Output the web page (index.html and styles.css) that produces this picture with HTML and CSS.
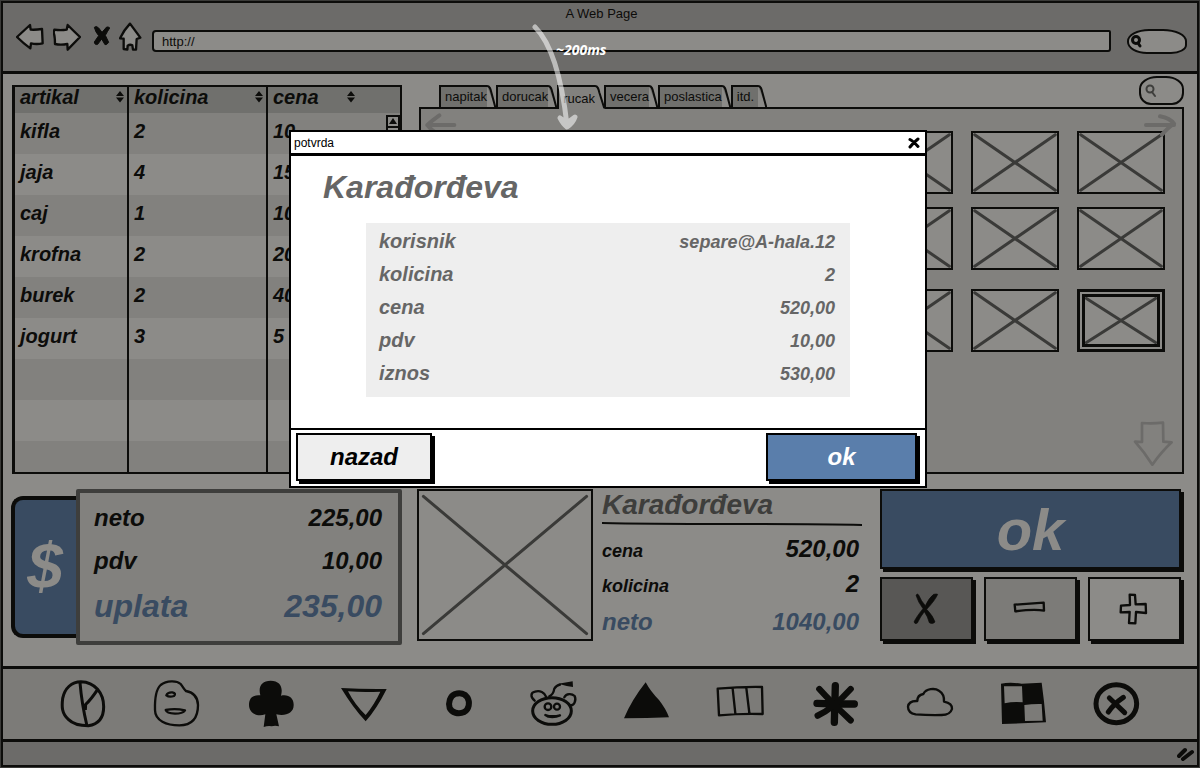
FILE: index.html
```html
<!DOCTYPE html>
<html lang="sr">
<head>
<meta charset="utf-8">
<title>A Web Page</title>
<link rel="stylesheet" href="styles.css">
</head>
<body>
<svg class="defs" width="0" height="0" aria-hidden="true">
  <symbol id="cross" viewBox="0 0 100 100" preserveAspectRatio="none">
    <path d="M2 3L98 97M98 3L2 97" vector-effect="non-scaling-stroke"/>
  </symbol>
  <symbol id="sort" viewBox="0 0 10 12"><path d="M5 0L9 5H1ZM1 6.5H9L5 11.5Z" fill="#0c0c0a"/></symbol>
  <symbol id="slant" viewBox="0 0 9 23"><path class="slant-line" d="M0 1C3 1 3.500 4 4.500 8L8.500 23"/></symbol>
</svg>

<div class="window">
  <header class="chrome">
    <div class="window-title">A Web Page</div>
    <div class="nav">
      <button class="icon-button" aria-label="Back"><svg width="28" height="40" viewBox="48 63 84 120"><path class="sketch fill" d="M51 111L90 75L92 89Q108 90 126 87L128 130Q110 134 93 130L91 145Q70 130 51 111Z"/></svg></button>
      <button class="icon-button" aria-label="Forward"><svg width="28" height="40" viewBox="159 63 84 120"><path class="sketch fill" d="M163 89Q182 92 200 89L203 75Q222 94 240 111L203 149L202 132Q182 136 165 132Q165 110 161 98Z"/></svg></button>
      <button class="icon-button" aria-label="Stop"><svg width="20" height="40" viewBox="270 63 60 120"><path d="M283 82Q289 76 296 84L306 97L320 81Q328 80 329 84Q322 95 316 106L326 127Q320 136 315 134L305 117L293 133Q284 136 283 126L296 107Q286 96 283 82Z" fill="#0c0c0a" stroke="#0c0c0a" stroke-width="3"/></svg></button>
      <button class="icon-button" aria-label="Home"><svg width="24" height="40" viewBox="357 63 72 120"><path class="sketch fill" d="M390 71L421 113L410 117L408 149L399 149L397 136Q390 132 383 137L382 149L371 147L371 116L360 115Q372 90 390 71Z"/></svg></button>
      <input class="url" type="text" value="http://" aria-label="Address">
      <label class="pill pill-browser"><svg width="12" height="14" viewBox="0 0 12 14"><circle cx="6" cy="6" r="3.500"/><path d="M8 9L10 12"/></svg><input type="search" aria-label="Web search"></label>
    </div>
  </header>

  <main class="main">
    <section class="order">
      <table>
        <colgroup><col class="col-name"><col class="col-qty"><col></colgroup>
        <thead><tr>
          <th><div class="head">artikal<svg width="10" height="12"><use href="#sort"/></svg></div></th>
          <th><div class="head">kolicina<svg width="10" height="12"><use href="#sort"/></svg></div></th>
          <th><div class="head head-price">cena<svg width="10" height="12"><use href="#sort"/></svg></div></th>
        </tr></thead>
        <tbody>
          <tr><td>kifla</td><td>2</td><td>10</td></tr>
          <tr><td>jaja</td><td>4</td><td>15</td></tr>
          <tr><td>caj</td><td>1</td><td>10</td></tr>
          <tr><td>krofna</td><td>2</td><td>20</td></tr>
          <tr><td>burek</td><td>2</td><td>40</td></tr>
          <tr><td>jogurt</td><td>3</td><td>5</td></tr>
          <tr><td></td><td></td><td></td></tr>
          <tr><td></td><td></td><td></td></tr>
          <tr><td></td><td></td><td></td></tr>
        </tbody>
      </table>
      <div class="scroll"><svg width="10" height="9" viewBox="0 0 10 9"><path d="M5 1L9 7H1Z" fill="#0c0c0a"/></svg></div>
    </section>

    <section class="catalog">
      <div class="catalog-top">
        <nav class="tabs">
          <button class="tab"><span>napitak</span><svg width="9" height="23"><use href="#slant"/></svg></button>
          <button class="tab"><span>dorucak</span><svg width="9" height="23"><use href="#slant"/></svg></button>
          <button class="tab selected"><span>rucak</span><svg width="10" height="24" viewBox="0 0 10 24"><path class="slant-line" d="M0 1C3 1 3.500 4 4.500 8L9.500 24H0"/></svg></button>
          <button class="tab"><span>vecera</span><svg width="9" height="23"><use href="#slant"/></svg></button>
          <button class="tab"><span>poslastica</span><svg width="9" height="23"><use href="#slant"/></svg></button>
          <button class="tab"><span>itd.</span><svg width="9" height="23"><use href="#slant"/></svg></button>
        </nav>
        <label class="pill pill-catalog"><svg width="12" height="14" viewBox="0 0 12 14"><circle cx="5" cy="5" r="3.500"/><path d="M7 8L10 12"/></svg><input type="search" aria-label="Search items"></label>
      </div>
      <div class="panel">
        <div class="tiles">
          <div class="tile"><svg><use href="#cross"/></svg></div><div class="tile"><svg><use href="#cross"/></svg></div><div class="tile"><svg><use href="#cross"/></svg></div><div class="tile"><svg><use href="#cross"/></svg></div><div class="tile"><svg><use href="#cross"/></svg></div><div class="tile"><svg><use href="#cross"/></svg></div><div class="tile"><svg><use href="#cross"/></svg></div>
          <div class="tile"><svg><use href="#cross"/></svg></div><div class="tile"><svg><use href="#cross"/></svg></div><div class="tile"><svg><use href="#cross"/></svg></div><div class="tile"><svg><use href="#cross"/></svg></div><div class="tile"><svg><use href="#cross"/></svg></div><div class="tile"><svg><use href="#cross"/></svg></div><div class="tile"><svg><use href="#cross"/></svg></div>
          <div class="tile"><svg><use href="#cross"/></svg></div><div class="tile"><svg><use href="#cross"/></svg></div><div class="tile"><svg><use href="#cross"/></svg></div><div class="tile"><svg><use href="#cross"/></svg></div><div class="tile"><svg><use href="#cross"/></svg></div><div class="tile"><svg><use href="#cross"/></svg></div><div class="tile current"><div class="tile-inner"><svg><use href="#cross"/></svg></div></div>
        </div>
        <button class="icon-button arrow-left" aria-label="Previous"><svg width="34" height="24" viewBox="69 339 102 72"><path class="faint-line" d="M163 375H82M118 346Q98 360 82 375Q98 395 118 404"/></svg></button>
        <button class="icon-button arrow-right" aria-label="Next"><svg width="34" height="24" viewBox="1032 339 102 72"><path class="faint-line" d="M1038 375H1122M1080 349Q1110 355 1122 371Q1105 382 1086 404"/></svg></button>
        <button class="icon-button arrow-down" aria-label="Scroll down"><svg width="42" height="48" viewBox="816 60 126 144"><path class="faint-outline" d="M846 69Q875 72 909 68L910 125L935 127Q905 155 877 194Q852 155 825 125L846 126Z"/></svg></button>
      </div>
    </section>

    <section class="payment">
      <button class="dollar" aria-label="Naplata">$</button>
      <dl class="totals">
        <div><dt>neto</dt><dd>225,00</dd></div>
        <div><dt>pdv</dt><dd>10,00</dd></div>
        <div class="grand"><dt>uplata</dt><dd>235,00</dd></div>
      </dl>
    </section>

    <section class="item">
      <div class="photo"><svg><use href="#cross"/></svg></div>
      <div class="details">
        <h2>Karađorđeva</h2>
        <svg class="rule" width="100%" height="4" viewBox="0 0 260 4" preserveAspectRatio="none"><path d="M0 1Q40 2 130 2T260 3" fill="none" stroke="#0c0c0a" stroke-width="2"/></svg>
        <dl>
          <div><dt>cena</dt><dd>520,00</dd></div>
          <div><dt>kolicina</dt><dd>2</dd></div>
          <div class="net"><dt>neto</dt><dd>1040,00</dd></div>
        </dl>
      </div>
      <div class="actions">
        <button class="raised confirm">ok</button>
        <button class="raised remove" aria-label="Remove"><svg width="32" height="32" viewBox="151 579 96 96"><path fill="#0c0c0a" stroke="#0c0c0a" stroke-width="2" d="M166 586Q170 579 174 585Q182 604 194 617Q206 592 219 583Q228 581 231 583Q224 600 198 628Q218 649 223 666Q216 674 206 668Q201 649 191 635Q179 650 170 669Q163 674 160 666Q166 652 187 626Q172 606 166 586Z"/></svg></button>
        <button class="raised minus" aria-label="Minus"><svg width="32" height="32" viewBox="460 579 96 96"><path class="thin" d="M459 614Q500 611 546 608L547 632Q520 626 461 634Z"/></svg></button>
        <button class="raised plus" aria-label="Plus"><svg width="32" height="32" viewBox="774 579 96 96"><path class="thin" d="M806 584L822 585L824 613L854 612L855 639L825 636L823 670L804 669L806 636L779 637L780 617L807 615Z"/></svg></button>
      </div>
    </section>
  </main>

  <nav class="toolbar">
    <button class="icon-button" aria-label="Pie"><svg width="48" height="48" viewBox="177 90 144 144"><path class="bold" d="M243 95C285 96 311 130 311 170C311 200 300 222 265 227C235 227 217 220 205 208C185 190 185 170 188 145C194 115 215 95 243 95ZM240 98Q245 160 261 228M293 118Q272 150 257 163L256 180"/></svg></button>
    <button class="icon-button" aria-label="Face"><svg width="48" height="48" viewBox="459 90 144 144"><path class="sketch" d="M482 105C500 91 530 91 542 102C550 112 552 118 558 123C580 127 593 140 594 165C594 205 575 226 538 226C500 226 465 212 465 180C464 145 468 118 482 105ZM499 136Q503 126 517 127Q530 130 522 138Q508 143 499 136ZM497 180Q525 174 555 181Q548 191 525 191Q500 190 497 180Z"/></svg></button>
    <button class="icon-button" aria-label="Club"><svg width="48" height="48" viewBox="741 90 144 144"><path class="solid" d="M781 136C774 110 785 92 812 92C840 92 850 112 843 137C866 132 882 145 881 166C881 190 855 200 829 193L837 229Q825 225 815 229Q804 227 791 231L796 193C770 202 747 188 747 165C747 142 760 134 781 136Z"/></svg></button>
    <button class="icon-button" aria-label="Down"><svg width="48" height="48" viewBox="1023 90 144 144"><path class="solid" fill-rule="evenodd" d="M1023 114Q1090 118 1160 117Q1130 177 1097 214Q1060 175 1023 114ZM1044 124Q1065 165 1097 195Q1122 165 1141 125Q1090 128 1044 124Z"/></svg></button>
    <button class="icon-button" aria-label="Record"><svg width="48" height="48" viewBox="105 90 144 144"><path fill="none" stroke="#0c0c0a" stroke-width="18" d="M165 132C180 127 195 131 202 142C211 158 207 178 193 186C175 194 155 188 149 174C144 158 150 138 165 132Z"/></svg></button>
    <button class="icon-button" aria-label="Alien"><svg width="48" height="48" viewBox="387 90 144 144"><ellipse class="bold" cx="456" cy="183" rx="58" ry="40"/><g class="sketch"><path d="M404 152C390 140 392 128 405 125C420 120 434 128 438 140M493 142C499 130 515 130 524 138C530 152 522 168 509 166M448 139Q460 134 463 116Q469 106 480 104"/><circle cx="444" cy="170" r="10"/><circle cx="471" cy="170" r="9"/><path d="M436 195Q455 202 480 196Q465 203 445 200Z"/></g><path class="solid" d="M475 101L518 94L519 111L500 108Z"/></svg></button>
    <button class="icon-button" aria-label="Up"><svg width="48" height="48" viewBox="669 90 144 144"><path class="solid" d="M737 97Q752 125 777 150Q798 177 807 202Q740 205 672 205Q695 150 737 97Z"/></svg></button>
    <button class="icon-button" aria-label="Columns"><svg width="48" height="48" viewBox="951 90 144 144"><path class="sketch" d="M953 116Q1020 110 1086 111L1088 192Q1020 190 957 196ZM998 116L1006 190M1039 114L1048 189"/></svg></button>
    <button class="icon-button" aria-label="Asterisk"><svg width="48" height="48" viewBox="33 90 144 144"><path fill="none" stroke="#0c0c0a" stroke-linecap="round" stroke-width="22" d="M106 107L103 217M51 160Q90 162 163 162"/><path fill="none" stroke="#0c0c0a" stroke-linecap="round" stroke-width="19" d="M58 117Q90 153 152 211M152 117Q100 175 53 197"/></svg></button>
    <button class="icon-button" aria-label="Cloud"><svg width="48" height="48" viewBox="315 90 144 144"><path class="sketch" d="M352 153Q352 135 370 132C378 115 405 114 417 122C430 130 433 142 432 155C448 158 457 165 456 177C452 190 442 195 425 195Q385 196 347 193C330 190 324 182 324 170C326 156 335 152 352 153Z"/></svg></button>
    <button class="icon-button" aria-label="Checkers"><svg width="48" height="48" viewBox="597 90 144 144"><path class="solid" fill-rule="evenodd" d="M603 101Q630 96 665 101L725 98Q733 155 738 217L606 222ZM612 109L614 160Q640 154 668 157L666 109ZM673 165L675 213L728 212L725 162Q700 161 673 165Z"/></svg></button>
    <button class="icon-button" aria-label="Close"><svg width="48" height="48" viewBox="879 90 144 144"><ellipse fill="none" stroke="#0c0c0a" stroke-width="15" cx="949" cy="161" rx="61" ry="57"/><path fill="none" stroke="#0c0c0a" stroke-linecap="round" stroke-width="15" d="M928 144Q950 165 974 188M970 142Q942 161 925 186"/></svg></button>
  </nav>
  <footer class="status"><svg width="18" height="16" viewBox="0 0 18 16"><path d="M2 10L8 4M6 13L15 6" fill="none" stroke="#0c0c0a" stroke-width="4" stroke-linecap="round"/></svg></footer>
</div>

<div class="overlay">
  <svg class="motion" width="60" height="110" viewBox="0 0 60 110"><path d="M14 6C32 24 41 60 46 104M39 97Q42 103 46 106Q52 102 54 96L46 102Z"/></svg>
  <span class="motion-time">~200ms</span>
  <section class="dialog" role="dialog" aria-label="potvrda">
    <header class="dialog-title">potvrda
      <button class="icon-button" aria-label="Close"><svg width="12" height="12" viewBox="0 0 12 12"><path d="M2 2.500Q5 4 10 9.500M10 2Q5 6 2 10" fill="none" stroke="#000" stroke-width="3" stroke-linecap="round"/></svg></button>
    </header>
    <div class="dialog-body">
      <h1>Karađorđeva</h1>
      <dl>
        <div><dt>korisnik</dt><dd>separe@A-hala.12</dd></div>
        <div><dt>kolicina</dt><dd>2</dd></div>
        <div><dt>cena</dt><dd>520,00</dd></div>
        <div><dt>pdv</dt><dd>10,00</dd></div>
        <div><dt>iznos</dt><dd>530,00</dd></div>
      </dl>
    </div>
    <footer class="dialog-actions">
      <button class="raised back">nazad</button>
      <button class="raised accept">ok</button>
    </footer>
  </section>
</div>
</body>
</html>
```
FILE: styles.css
```css
:root {
  --ink: #0c0c0a;
  --page: #8c8b88;
  --shade: #82817e;
  --chrome: #6c6b69;
  --bar: #7c7b78;
  --blue: #394b61;
  --dark: #3e3e3c;
}
* { box-sizing: border-box; }
body {
  margin: 0;
  height: 100vh;
  background: #3a3a38;
  color: var(--ink);
  font: 13px "Liberation Sans", Arial, sans-serif;
}
button, input { font: inherit; color: inherit; }
button { padding: 0; }
svg { display: block; }
h1, h2, dl, dd { margin: 0; }
.defs { position: absolute; }

.icon-button { background: none; border: 0; line-height: 0; }
.sketch { fill: none; stroke: var(--ink); stroke-width: 7; stroke-linejoin: round; stroke-linecap: round; }
.fill { fill: var(--page); }
.bold { fill: none; stroke: var(--ink); stroke-width: 9; stroke-linejoin: round; }
.thin { fill: none; stroke: var(--ink); stroke-width: 7; stroke-linejoin: round; }
.solid { fill: var(--ink); }

.window {
  height: 100%;
  display: flex;
  flex-direction: column;
  border: 1px solid #3a3a38;
  outline: 2px solid var(--ink);
  outline-offset: -3px;
  padding: 2px;
  background: var(--page);
}

.chrome { background: var(--chrome); border-bottom: 3px solid var(--ink); padding: 2px 10px 10px 13px; }
.window-title { text-align: center; line-height: 18px; height: 16px; }
.nav { display: flex; align-items: center; gap: 9px; height: 40px; }
.url {
  flex: 1;
  min-width: 0;
  height: 22px;
  margin-right: 7px;
  padding: 0 8px;
  border: 2px solid var(--ink);
  border-radius: 4px 2px 3px 4px;
  background: var(--page);
}
.pill { display: flex; align-items: center; border: 2px solid var(--ink); background: var(--page); }
.pill input { flex: 1; min-width: 0; width: 0; border: 0; background: none; padding: 0; }
.pill svg { fill: none; stroke: var(--ink); stroke-linecap: round; }
.pill-browser { width: 60px; height: 25px; padding-left: 1px; border-radius: 22px 24px 16px 20px / 12px 12px 9px 12px; }
.pill-browser svg { stroke-width: 3; }
.pill-catalog { width: 45px; height: 29px; padding-left: 4px; border-radius: 18px 18px 12px 12px / 13px 13px 12px 12px; }
.pill-catalog svg { stroke: var(--dark); stroke-width: 2; }

.main {
  flex: 1;
  min-height: 0;
  display: grid;
  grid-template-columns: 390fr 767fr;
  grid-template-rows: minmax(0, 1fr) auto;
  gap: 15px;
  padding: 2px 13px 21px 9px;
}

.order {
  position: relative;
  overflow: hidden;
  margin-top: 9px;
  border: 2px solid var(--ink);
  border-left-width: 3px;
}
.order table {
  width: 100%;
  table-layout: fixed;
  border-collapse: collapse;
  font-size: 20px;
  font-weight: bold;
  font-style: italic;
}
.col-name { width: 112px; }
.col-qty { width: 139px; }
.order th { height: 26px; padding: 0 2px 6px 5px; line-height: 20px; text-align: left; background: #70706d; }
.order td { height: 41px; padding: 0 0 4px 5px; background: var(--page); }
.order tbody tr:nth-child(odd) td { background: var(--shade); }
.order th + th, .order td + td { box-shadow: inset 2px 0 0 var(--ink); padding-left: 7px; }
.head { display: flex; align-items: center; justify-content: space-between; }
.head-price { padding-right: 42px; }
.scroll {
  position: absolute;
  top: 28px;
  right: 0;
  bottom: 0;
  width: 14px;
  border: 2px solid var(--ink);
  background: var(--page);
}
.scroll svg { width: 100%; height: 11px; border-bottom: 2px solid var(--ink); }

.catalog { display: flex; flex-direction: column; min-width: 0; }
.catalog-top { display: flex; justify-content: space-between; align-items: flex-start; height: 31px; }
.tabs { display: flex; align-self: flex-end; padding-left: 22px; }
.tab { display: flex; border: 0; background: none; height: 22px; z-index: 1; }
.tab span {
  height: 22px;
  padding: 0 0 0 4px;
  border: solid var(--ink);
  border-width: 2px 0 0 2px;
  background: #70706d;
  line-height: 20px;
}
.tab:last-child span { padding-right: 4px; }
.tab svg { fill: #70706d; overflow: visible; }
.slant-line { stroke: var(--ink); stroke-width: 2; }
.tab.selected { height: 24px; margin: 0 -1px -2px 0; }
.tab.selected span { height: 24px; line-height: 24px; background: var(--shade); }
.tab.selected svg { fill: var(--shade); overflow: hidden; }
.tab.selected .slant-line { stroke-dasharray: 25 60; }
.panel {
  flex: 1;
  position: relative;
  margin-left: 2px;
  padding: 22px 17px 0 0;
  border: 2px solid var(--ink);
  background: var(--shade);
}
.tiles {
  display: grid;
  grid-template-columns: repeat(7, 88px);
  grid-template-rows: 63px 63px 69px;
  gap: 13px 18px;
  align-items: end;
  justify-content: end;
}
.tile { height: 63px; border: 2px solid var(--ink); background: var(--page); }
.tile svg, .photo svg { width: 100%; height: 100%; fill: none; stroke: #3a3a38; stroke-width: 3; stroke-linecap: round; }
.tile.current { border-width: 3px; padding: 2px; }
.tile-inner { height: 100%; border: 3px solid var(--ink); }
.arrow-left { position: absolute; top: 4px; left: 2px; }
.arrow-right { position: absolute; top: 4px; right: 4px; }
.arrow-down { position: absolute; right: 8px; bottom: 4px; }
.faint-line { fill: none; stroke: #6c6b69; stroke-width: 12; stroke-linecap: round; stroke-linejoin: round; }
.faint-outline { fill: none; stroke: #6c6b69; stroke-width: 8; stroke-linejoin: round; }

dl > div { display: flex; justify-content: space-between; align-items: baseline; }
dl { font-weight: bold; font-style: italic; }

.payment { display: flex; align-items: flex-start; height: 156px; }
.dollar {
  width: 68px;
  height: 142px;
  margin: 7px 0 0 -1px;
  padding-right: 4px;
  border: 4px solid var(--ink);
  border-radius: 12px 0 0 12px;
  border-right: 0;
  background: var(--blue);
  color: var(--page);
  font-size: 64px;
  font-weight: bold;
  font-style: italic;
}
.totals {
  flex: 1;
  height: 156px;
  margin-left: -3px;
  padding: 3px 16px 0 14px;
  border: 4px solid var(--dark);
  border-radius: 2px;
  background: var(--shade);
  font-size: 24px;
  line-height: 43px;
  z-index: 1;
}
.totals .grand { font-size: 32px; line-height: 48px; color: var(--blue); }

.item { display: flex; min-width: 0; }
.photo { flex: 0 0 176px; height: 152px; padding: 1px; border: 2px solid var(--ink); }
.details { flex: 1; min-width: 0; margin: 0 18px 0 9px; }
.details h2 { font-size: 28px; line-height: 32px; font-style: italic; color: var(--dark); }
.rule { margin-top: 1px; }
.details dl { padding: 5px 3px 0 0; line-height: 36px; font-size: 18px; }
.details dl > div { height: 35px; }
.details dd { font-size: 24px; }
.details .net { font-size: 24px; line-height: 42px; color: var(--blue); }
.actions {
  flex: 0 0 304px;
  display: grid;
  grid-template-columns: repeat(3, 1fr);
  grid-template-rows: 80px 64px;
  gap: 8px 11px;
  padding-right: 3px;
}

.raised {
  display: flex;
  align-items: center;
  justify-content: center;
  border: 2px solid var(--ink);
  box-shadow: 3px 3px 0 var(--ink);
  font-weight: bold;
  font-style: italic;
}
.confirm { grid-column: 1 / -1; background: var(--blue); color: var(--page); font-size: 58px; }
.remove { background: #585755; }
.minus { background: var(--bar); }
.plus { background: var(--page); }
.minus svg, .plus svg { overflow: visible; }

.toolbar {
  display: grid;
  grid-template-columns: repeat(12, 1fr);
  place-items: center;
  height: 73px;
  padding: 0 33px;
  border-top: 3px solid var(--ink);
  background: var(--bar);
}
.toolbar svg { overflow: visible; }
.status {
  display: flex;
  align-items: center;
  justify-content: flex-end;
  height: 26px;
  padding-right: 2px;
  border-top: 3px solid var(--ink);
  background: var(--chrome);
}

.overlay {
  position: absolute;
  inset: 0;
  z-index: 5;
  display: flex;
  justify-content: center;
  align-items: flex-start;
  padding: 130px 0 0 16px;
}
.motion { position: absolute; top: 21px; left: calc(50% - 79px); fill: none; stroke: #fff; stroke-width: 5; stroke-linecap: round; stroke-linejoin: round; opacity: .55; }
.motion-time {
  position: absolute;
  top: 41px;
  left: calc(50% - 44px);
  color: #fff;
  font: italic bold 14px/18px "Open Sans", "Noto Sans", sans-serif;
}
.dialog { width: 638px; border: 2px solid #000; background: #fff; color: #000; }
.dialog-title {
  display: flex;
  align-items: center;
  justify-content: space-between;
  height: 24px;
  padding: 0 5px 0 3px;
  border-bottom: 3px solid #000;
  font-size: 12px;
}
.dialog-body { padding: 11px 75px 31px; color: #666; }
.dialog-body h1 { margin: 0 0 16px -43px; font-size: 32px; line-height: 40px; font-style: italic; }
.dialog-body dl { padding: 2px 15px 7px 13px; background: #eee; font-size: 20px; line-height: 33px; }
.dialog-body dl > div { height: 33px; }
.dialog-body dd { font-size: 18px; }
.dialog-actions { display: flex; justify-content: space-between; padding: 3px 8px 5px 5px; border-top: 2px solid #000; }
.dialog-actions .raised { height: 48px; border-color: #000; box-shadow: 3px 3px 0 #000; font-size: 24px; }
.back { width: 136px; background: #eee; }
.accept { width: 151px; background: #5a7eab; color: #fff; }
```
